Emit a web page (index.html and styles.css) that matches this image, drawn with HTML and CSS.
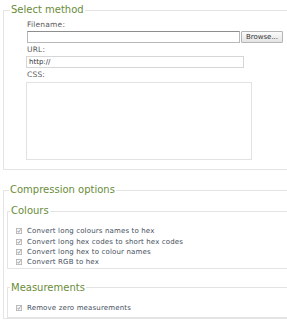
FILE: index.html
```html
<!DOCTYPE html>
<html lang="en">
<head>
    <meta charset="UTF-8">
    <title>CSS Compressor</title>
    <link rel="stylesheet" href="styles.css">
</head>
<body>
    <fieldset class="section method">
        <legend>Select method</legend>
        <div class="fields">
            <label for="file">Filename:</label>
            <div class="file-row">
                <span class="file-box" id="file"></span>
                <button class="browse">Browse...</button>
            </div>
            <label for="url">URL:</label>
            <input type="text" id="url" class="url" value="http://">
            <label for="css">CSS:</label>
            <textarea id="css" class="css"></textarea>
        </div>
    </fieldset>

    <fieldset class="section compression">
        <legend>Compression options</legend>

        <fieldset class="group colours">
            <legend>Colours</legend>
            <ul class="checks">
                <li><svg class="tick" viewBox="0 0 7 7"><rect x="0.5" y="0.5" width="6" height="6" fill="#f6f6f6" stroke="#b4b4b4"/><path d="M1.8 3.4 L3 5 L5.4 1.6" fill="none" stroke="#8a8a8a" stroke-width="0.9"/></svg>Convert long colours names to hex</li>
                <li><svg class="tick" viewBox="0 0 7 7"><rect x="0.5" y="0.5" width="6" height="6" fill="#f6f6f6" stroke="#b4b4b4"/><path d="M1.8 3.4 L3 5 L5.4 1.6" fill="none" stroke="#8a8a8a" stroke-width="0.9"/></svg>Convert long hex codes to short hex codes</li>
                <li><svg class="tick" viewBox="0 0 7 7"><rect x="0.5" y="0.5" width="6" height="6" fill="#f6f6f6" stroke="#b4b4b4"/><path d="M1.8 3.4 L3 5 L5.4 1.6" fill="none" stroke="#8a8a8a" stroke-width="0.9"/></svg>Convert long hex to colour names</li>
                <li><svg class="tick" viewBox="0 0 7 7"><rect x="0.5" y="0.5" width="6" height="6" fill="#f6f6f6" stroke="#b4b4b4"/><path d="M1.8 3.4 L3 5 L5.4 1.6" fill="none" stroke="#8a8a8a" stroke-width="0.9"/></svg>Convert RGB to hex</li>
            </ul>
        </fieldset>

        <fieldset class="group measurements">
            <legend>Measurements</legend>
            <ul class="checks">
                <li><svg class="tick" viewBox="0 0 7 7"><rect x="0.5" y="0.5" width="6" height="6" fill="#f6f6f6" stroke="#b4b4b4"/><path d="M1.8 3.4 L3 5 L5.4 1.6" fill="none" stroke="#8a8a8a" stroke-width="0.9"/></svg>Remove zero measurements</li>
            </ul>
        </fieldset>
    </fieldset>
</body>
</html>
```

FILE: styles.css
```css
html, body {
    overflow: hidden;
}
body {
    margin: 3px 0 0 0;
    background: #ffffff;
    font-family: "DejaVu Sans", Verdana, sans-serif;
}
fieldset {
    border: 1px solid #e4e4e4;
    border-right: none;
    min-width: 0;
}
legend {
    font-size: 10px;
    line-height: 14px;
    color: #6a8c3a;
    padding: 0 1px;
}
.section {
    margin: 0 0 0 3px;
}
.method {
    padding: 0 0 9px 6px;
}
.fields {
    display: flex;
    flex-direction: column;
    align-items: flex-start;
    padding: 3px 0 0 16px;
}
label {
    font-size: 7.5px;
    line-height: 10px;
    color: #5a5a5a;
    margin-left: 1px;
    letter-spacing: 0.2px;
}
.file-row {
    display: flex;
    margin: 1px 0 2px 1px;
}
.file-box {
    box-sizing: border-box;
    width: 213px;
    height: 12px;
    border: 1px solid #b8b8b8;
    border-top-color: #8e8e8e;
    background: #fff;
}
.browse {
    box-sizing: border-box;
    width: 42px;
    height: 12px;
    margin-left: 1px;
    padding: 0;
    border: 1px solid #b5b5b5;
    border-radius: 1px;
    background: linear-gradient(#fbfbfb, #e4e4e4);
    font-family: "DejaVu Sans", sans-serif;
    font-size: 7px;
    line-height: 10px;
    color: #333;
}
.url {
    box-sizing: border-box;
    width: 218px;
    height: 12px;
    margin: 1px 0 2px 0;
    padding: 0 2px;
    border: 1px solid #d6d6d6;
    font-family: "DejaVu Sans", sans-serif;
    font-size: 7px;
    color: #333;
    outline: none;
}
.css {
    box-sizing: border-box;
    width: 226px;
    height: 78px;
    margin: 2px 0 0 0;
    border: 1px solid #e2e2e2;
    resize: none;
}
.compression {
    margin-top: 13px;
    padding: 0 0 0 3px;
}
.compression > legend {
    margin-left: 2px;
}
.group {
    margin: 7px 0 0 0;
    padding: 0 0 0 2px;
}
.measurements {
    margin-top: 12px;
    padding-bottom: 4px;
}
.checks {
    list-style: none;
    margin: 8px 0 0 6px;
    padding: 0;
}
.checks li {
    display: flex;
    align-items: center;
    height: 10.4px;
    font-size: 7px;
    color: #46505e;
    letter-spacing: 0.15px;
    white-space: nowrap;
}
.tick {
    width: 6px;
    height: 6px;
    margin-right: 5px;
    flex: none;
}
```
